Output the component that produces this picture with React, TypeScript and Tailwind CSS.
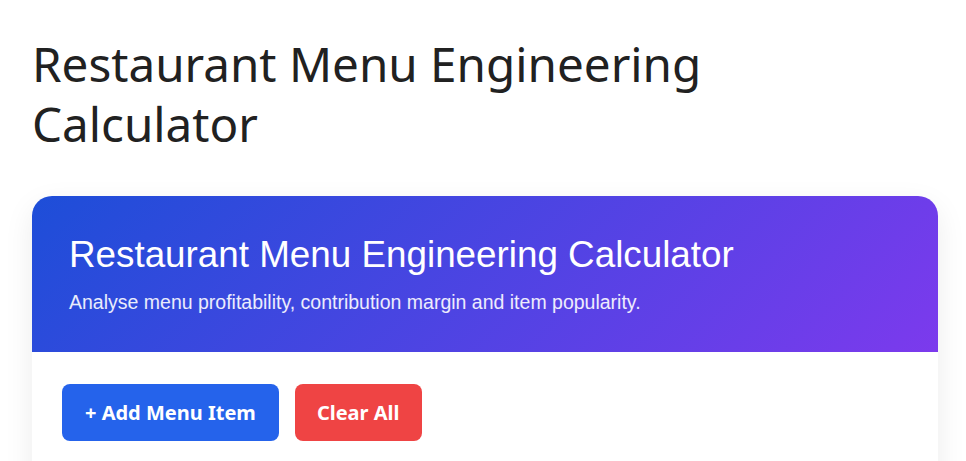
export default function App() {
  return (
    <div className="min-h-screen bg-white pl-8 pr-[28px] pt-[34px] pb-8" style={{ fontFamily: '"Noto Sans", "Open Sans", sans-serif' }}>
      <h1 className="text-[47.6px] leading-[60px] font-normal text-[#212121] mb-[42px]">
        Restaurant Menu Engineering Calculator
      </h1>
      <div className="rounded-[20px] bg-white shadow-[0_10px_30px_rgba(0,0,0,0.08)] overflow-hidden">
        <div
          className="bg-[linear-gradient(135deg,#1d4ed8,#7c3aed)] px-[37px] pt-[37.5px] pb-[39.5px] text-white"
          style={{ fontFamily: '"Liberation Sans", Arial, sans-serif' }}
        >
          <h2 className="text-[36.8px] leading-[42px] font-normal">Restaurant Menu Engineering Calculator</h2>
          <p className="mt-[15px] text-[19.5px] leading-[22px] text-white/90">
            Analyse menu profitability, contribution margin and item popularity.
          </p>
        </div>
        <div className="pl-[30px] pt-[32px] pb-[64px] flex gap-4">
          <button className="bg-[#2563eb] text-white font-bold text-[20px] h-[57px] px-[23px] rounded-lg">
            + Add Menu Item
          </button>
          <button className="bg-[#ef4444] text-white font-bold text-[20px] h-[57px] px-[22px] rounded-lg">
            Clear All
          </button>
        </div>
      </div>
    </div>
  );
}
